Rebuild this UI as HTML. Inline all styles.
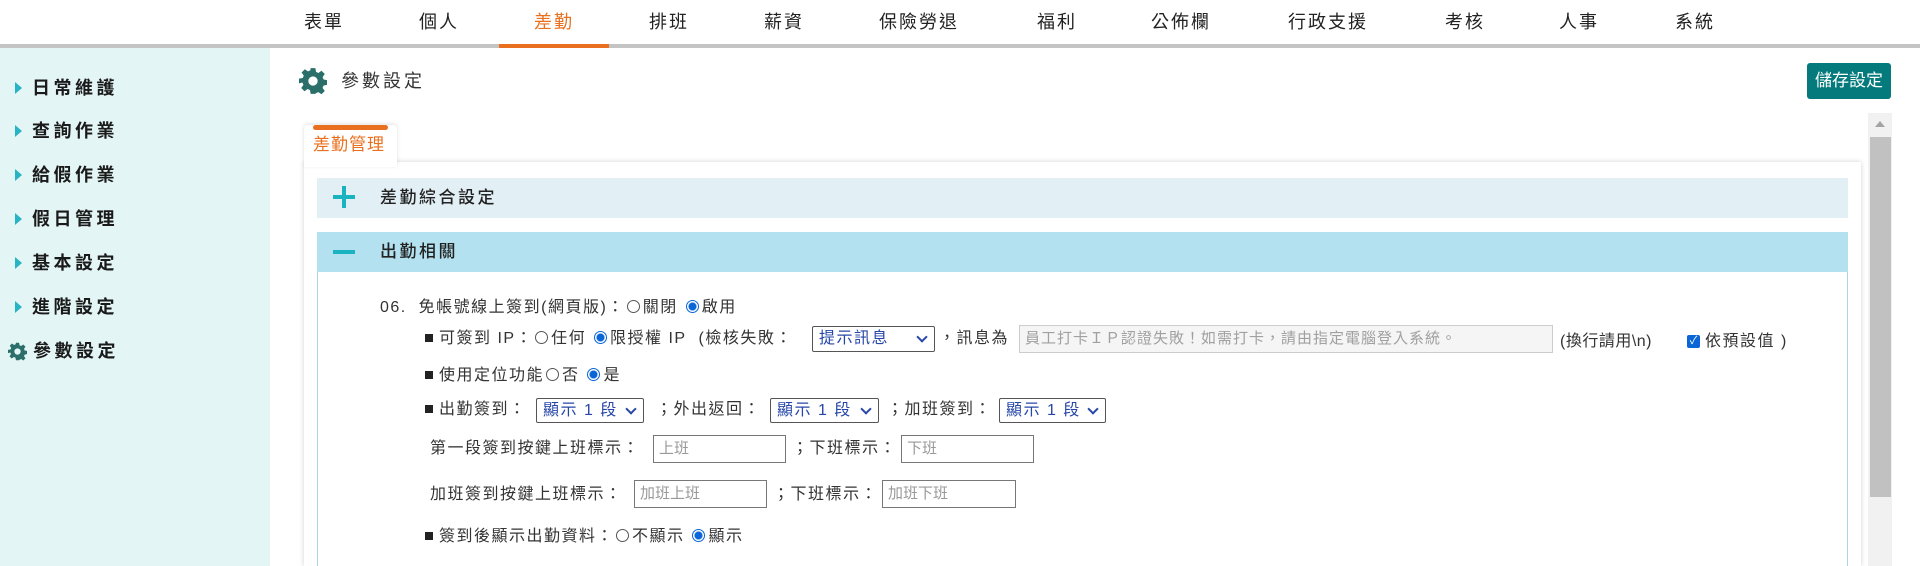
<!DOCTYPE html>
<html style="overflow:hidden;height:566px"><head><meta charset="utf-8"><style>
*{margin:0;padding:0;box-sizing:border-box}
body{width:1920px;height:566px;overflow:hidden;background:#fff;font-family:"Liberation Sans","Noto Sans CJK TC",sans-serif;color:#333;position:relative}
.a{position:absolute;white-space:nowrap}
.nav{font-size:18px;letter-spacing:2px;color:#222;top:10px;line-height:24px}
.side{font-size:18px;font-weight:bold;letter-spacing:3.5px;color:#1a1a1a;line-height:22px}
.tri{position:absolute;width:0;height:0;border-left:7px solid #28b4c4;border-top:6px solid transparent;border-bottom:6px solid transparent}
.t{font-size:16px;letter-spacing:1.5px;color:#333;line-height:20px}
.r{display:inline-block;width:13px;height:13px;border:1px solid #555;border-radius:50%;vertical-align:-1px;margin:0 3px 0 2px}
.rc{border:1px solid #0a66d6;background:radial-gradient(circle,#0a66d6 0 3.5px,#fff 4.5px)}
.b{display:inline-block;width:8px;height:8px;background:#222;margin-right:6px;vertical-align:1px}
.sel{position:absolute;border:1px solid #555;border-radius:2px;background:#fff;color:#2747a8;font-size:16px;letter-spacing:1.5px;padding-left:6px;line-height:24px}
.sel:after{content:"";position:absolute;right:8px;top:6px;width:6px;height:6px;border-right:2px solid #2747a8;border-bottom:2px solid #2747a8;transform:rotate(45deg)}
.inp{position:absolute;border:1px solid #777;background:#fff;color:#999;font-size:15px;padding-left:5px;line-height:26px}
</style></head><body>
<div class="a nav" style="left:304px">表單</div>
<div class="a nav" style="left:419px">個人</div>
<div class="a nav" style="left:534px;color:#e8701f">差勤</div>
<div class="a nav" style="left:649px">排班</div>
<div class="a nav" style="left:764px">薪資</div>
<div class="a nav" style="left:879px">保險勞退</div>
<div class="a nav" style="left:1037px">福利</div>
<div class="a nav" style="left:1151px">公佈欄</div>
<div class="a nav" style="left:1288px">行政支援</div>
<div class="a nav" style="left:1445px">考核</div>
<div class="a nav" style="left:1559px">人事</div>
<div class="a nav" style="left:1675px">系統</div>
<div class="a" style="left:0;top:44px;width:1920px;height:4px;background:#c4c4c4"></div>
<div class="a" style="left:499px;top:44px;width:110px;height:4px;background:#e8701f"></div>
<div class="a" style="left:0;top:48px;width:270px;height:518px;background:#e4f5f6"></div>
<div class="tri" style="left:15px;top:82px"></div><div class="a side" style="left:32px;top:77px">日常維護</div>
<div class="tri" style="left:15px;top:125px"></div><div class="a side" style="left:32px;top:120px">查詢作業</div>
<div class="tri" style="left:15px;top:169px"></div><div class="a side" style="left:32px;top:164px">給假作業</div>
<div class="tri" style="left:15px;top:213px"></div><div class="a side" style="left:32px;top:208px">假日管理</div>
<div class="tri" style="left:15px;top:257px"></div><div class="a side" style="left:32px;top:252px">基本設定</div>
<div class="tri" style="left:15px;top:301px"></div><div class="a side" style="left:32px;top:296px">進階設定</div>
<svg class="a" style="left:8px;top:342px" width="19" height="19" viewBox="0 0 24 24"><path fill="#2a6f6a" d="M10 1h4l.6 3.2 2 .9 2.7-1.9 2.8 2.8-1.9 2.7.9 2 3.2.6v4l-3.2.6-.9 2 1.9 2.7-2.8 2.8-2.7-1.9-2 .9L14 23h-4l-.6-3.2-2-.9-2.7 1.9-2.8-2.8 1.9-2.7-.9-2L0 14v-4l3.2-.6.9-2L2.2 4.7 5 1.9l2.7 1.9 2-.9zM12 8a4 4 0 100 8 4 4 0 000-8z"/></svg>
<div class="a side" style="left:33px;top:340px">參數設定</div>
<svg class="a" style="left:299px;top:67px" width="28" height="28" viewBox="0 0 24 24"><path fill="#2a6f6a" d="M10 1h4l.6 3.2 2 .9 2.7-1.9 2.8 2.8-1.9 2.7.9 2 3.2.6v4l-3.2.6-.9 2 1.9 2.7-2.8 2.8-2.7-1.9-2 .9L14 23h-4l-.6-3.2-2-.9-2.7 1.9-2.8-2.8 1.9-2.7-.9-2L0 14v-4l3.2-.6.9-2L2.2 4.7 5 1.9l2.7 1.9 2-.9zM12 8a4 4 0 100 8 4 4 0 000-8z"/></svg>
<div class="a" style="left:341px;top:70px;font-size:18px;letter-spacing:3px;color:#333;line-height:22px">參數設定</div>
<div class="a" style="left:1807px;top:63px;width:84px;height:36px;background:#057a7c;border-radius:3px;color:#fff;font-size:17px;line-height:36px;text-align:center">儲存設定</div>
<div class="a" style="left:1868px;top:113px;width:24px;height:453px;background:#f1f1f1"></div>
<div class="a" style="left:1875px;top:121px;width:0;height:0;border-left:5px solid transparent;border-right:5px solid transparent;border-bottom:6px solid #a3a3a3"></div>
<div class="a" style="left:1870px;top:137px;width:21px;height:360px;background:#c1c1c1"></div>
<div class="a" style="left:304px;top:162px;width:1557px;height:404px;background:#fff;box-shadow:0 0 5px rgba(0,0,0,.18)"></div>
<div class="a" style="left:304px;top:125px;width:93px;height:42px;background:#fff;box-shadow:0 -1px 4px rgba(0,0,0,.12);border-radius:4px 4px 0 0"></div>
<div class="a" style="left:313px;top:125px;width:75px;height:5px;background:#e8701f;border-radius:3px"></div>
<div class="a" style="left:313px;top:134px;font-size:17px;color:#e8701f;letter-spacing:1px;line-height:22px">差勤管理</div>
<div class="a" style="left:317px;top:178px;width:1531px;height:40px;background:#e2f0f5"></div>
<div class="a" style="top:186px;width:4px;height:22px;background:#1cb3c0;left:342px"></div>
<div class="a" style="left:333px;top:195px;width:22px;height:4px;background:#1cb3c0"></div>
<div class="a" style="left:380px;top:187px;font-size:17px;letter-spacing:2.5px;color:#222;line-height:22px;font-weight:500">差勤綜合設定</div>
<div class="a" style="left:317px;top:232px;width:1531px;height:40px;background:#b3e1ef"></div>
<div class="a" style="left:333px;top:250px;width:22px;height:4px;background:#1cb3c0"></div>
<div class="a" style="left:380px;top:241px;font-size:17px;letter-spacing:2.5px;color:#222;line-height:22px;font-weight:500">出勤相關</div>
<div class="a" style="left:317px;top:272px;width:1531px;height:294px;border-left:1px solid #a9d6e5;border-right:1px solid #a9d6e5"></div>
<div class="a t" style="left:380px;top:298px">06.&nbsp; 免帳號線上簽到(網頁版)：<span class="r"></span>關閉 <span class="r rc"></span>啟用</div>
<div class="a t" style="left:425px;top:329px"><span class="b"></span>可簽到 IP：<span class="r"></span>任何 <span class="r rc"></span>限授權 IP&nbsp; (檢核失敗：</div>
<div class="sel" style="left:812px;top:326px;width:123px;height:26px">提示訊息</div>
<div class="a t" style="left:939px;top:329px">，訊息為</div>
<div class="inp" style="left:1019px;top:325px;width:534px;height:28px;background:#f5f5f5;border-color:#ccc;color:#a0a0a0;letter-spacing:1px">員工打卡ＩＰ認證失敗！如需打卡，請由指定電腦登入系統。</div>
<div class="a t" style="left:1560px;top:332px;letter-spacing:.5px">(換行請用\n)</div>
<div class="a" style="left:1687px;top:335px;width:13px;height:13px;background:#0a66d6;border-radius:2px;color:#fff;font-size:11px;line-height:13px;text-align:center">✓</div>
<div class="a t" style="left:1705px;top:332px">依預設值 )</div>
<div class="a t" style="left:425px;top:366px"><span class="b"></span>使用定位功能<span class="r"></span>否 <span class="r rc"></span>是</div>
<div class="a t" style="left:425px;top:400px"><span class="b"></span>出勤簽到：</div>
<div class="sel" style="left:536px;top:398px;width:108px;height:25px">顯示 1 段</div>
<div class="a t" style="left:656px;top:400px">；外出返回：</div>
<div class="sel" style="left:770px;top:398px;width:109px;height:25px">顯示 1 段</div>
<div class="a t" style="left:887px;top:400px">；加班簽到：</div>
<div class="sel" style="left:999px;top:398px;width:107px;height:25px">顯示 1 段</div>
<div class="a t" style="left:430px;top:439px">第一段簽到按鍵上班標示：</div>
<div class="inp" style="left:653px;top:435px;width:133px;height:28px">上班</div>
<div class="a t" style="left:792px;top:439px">；下班標示：</div>
<div class="inp" style="left:901px;top:435px;width:133px;height:28px">下班</div>
<div class="a t" style="left:430px;top:485px">加班簽到按鍵上班標示：</div>
<div class="inp" style="left:634px;top:480px;width:133px;height:28px">加班上班</div>
<div class="a t" style="left:773px;top:485px">；下班標示：</div>
<div class="inp" style="left:882px;top:480px;width:134px;height:28px">加班下班</div>
<div class="a t" style="left:425px;top:527px"><span class="b"></span>簽到後顯示出勤資料：<span class="r"></span>不顯示 <span class="r rc"></span>顯示</div>
</body></html>
